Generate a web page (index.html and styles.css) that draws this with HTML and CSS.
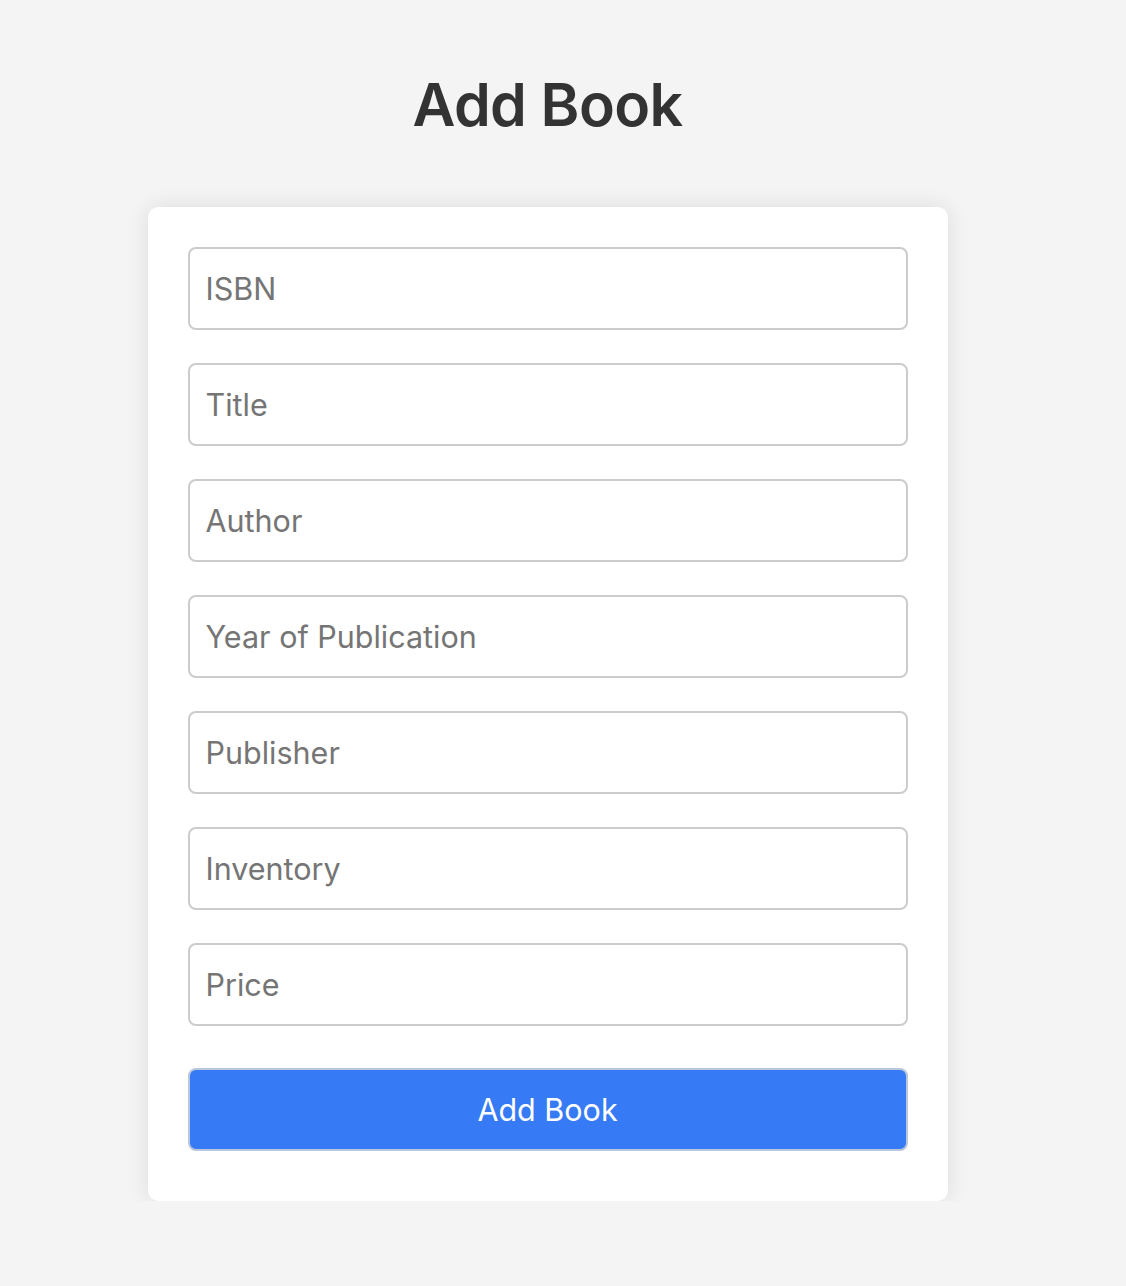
FILE: index.html
```html
<!DOCTYPE html>
<html lang="en">
<head>
<meta charset="utf-8">
<title>Add Book</title>
<link rel="stylesheet" href="styles.css">
</head>
<body>
<main class="page">
  <h1 class="page-title">Add Book</h1>
  <form class="card">
    <input class="field" type="text" placeholder="ISBN">
    <input class="field" type="text" placeholder="Title">
    <input class="field" type="text" placeholder="Author">
    <input class="field" type="text" placeholder="Year of Publication">
    <input class="field" type="text" placeholder="Publisher">
    <input class="field" type="text" placeholder="Inventory">
    <input class="field" type="text" placeholder="Price">
    <button class="submit" type="button">Add Book</button>
  </form>
</main>
</body>
</html>
```

FILE: styles.css
```css
html, body {
  margin: 0;
  padding: 0;
  background: #f4f4f4;
  font-family: Inter, "Liberation Sans", Arial, sans-serif;
}

.page {
  display: flex;
  flex-direction: column;
  align-items: center;
  padding-top: 66px;
  padding-right: 31px;
}

.page-title {
  margin: 0 0 63px;
  font-size: 59px;
  line-height: 78px;
  font-weight: 600;
  color: #333333;
  letter-spacing: -0.6px;
}

.card {
  box-sizing: border-box;
  width: 800px;
  padding: 40px 40px 50px;
  background: #ffffff;
  border-radius: 10px;
  box-shadow: 0 0 22px rgba(0, 0, 0, 0.1);
  display: flex;
  flex-direction: column;
  gap: 33px;
}

.field {
  box-sizing: border-box;
  width: 100%;
  height: 83px;
  flex: 0 0 83px;
  margin: 0;
  padding: 0 16px;
  border: 2px solid #cccccc;
  border-radius: 8px;
  font-family: inherit;
  font-size: 30.5px;
  color: #333333;
  background: #ffffff;
  outline: none;
}

.field::placeholder {
  color: #757575;
  opacity: 1;
}

.submit {
  box-sizing: border-box;
  width: 100%;
  height: 83px;
  flex: 0 0 83px;
  margin-top: 9px;
  border: 2px solid #b9c6dc;
  border-radius: 8px;
  background: #367af5;
  color: #ffffff;
  font-family: inherit;
  font-size: 30.5px;
  cursor: pointer;
}
```
